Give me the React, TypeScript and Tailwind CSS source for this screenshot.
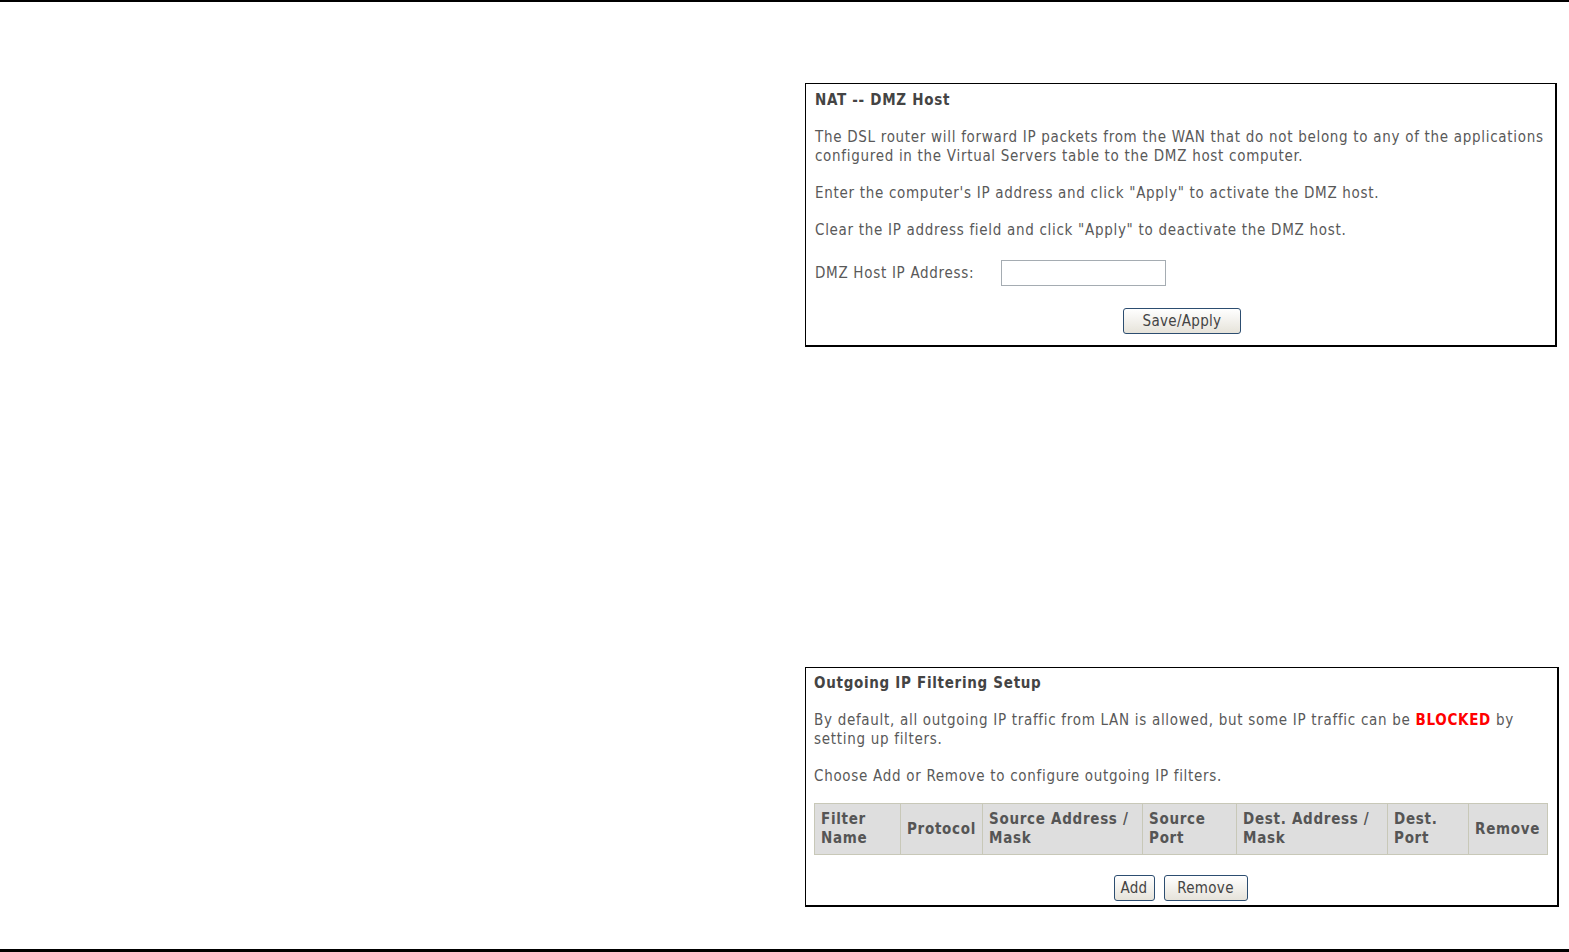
const font = "font-['DejaVu_Sans_Condensed','DejaVu_Sans',sans-serif] [font-stretch:condensed] tracking-[0.7px]";

const columns = [
  { label: ['Filter', 'Name'], w: 'w-[86px]' },
  { label: ['Protocol'], w: 'w-[82px]' },
  { label: ['Source Address /', 'Mask'], w: 'w-[160px]' },
  { label: ['Source', 'Port'], w: 'w-[94px]' },
  { label: ['Dest. Address /', 'Mask'], w: 'w-[151px]' },
  { label: ['Dest.', 'Port'], w: 'w-[81px]' },
  { label: ['Remove'], w: 'w-[79px]' },
];

function XpButton({ children, className = '' }: { children: React.ReactNode; className?: string }) {
  return (
    <button
      className={`h-[26px] rounded-[3px] border border-[#2c4d70] bg-gradient-to-b from-white to-[#e6e3da] text-[15px] leading-none tracking-[0.3px] text-[#444] ${className}`}>
      {children}
    </button>
  );
}

export default function App() {
  return (
    <div className={`relative h-[952px] w-full bg-white text-[15px] text-[#595959] ${font}`}>
      <div className="h-[2px] w-full bg-black" />
      <div className="pl-[805px] pt-[81px]">
        {/* DMZ host panel */}
        <section className="h-[264px] w-[752px] border border-r-2 border-b-2 border-black px-[9px] pt-[6px]">
          <h2 className="font-bold text-[#444] leading-[20px]">NAT -- DMZ Host</h2>
          <p className="mt-[18px] leading-[19px]">
            The DSL router will forward IP packets from the WAN that do not belong to any of the applications
            <br />
            configured in the Virtual Servers table to the DMZ host computer.
          </p>
          <p className="mt-[18px] leading-[19px]">
            Enter the computer's IP address and click "Apply" to activate the DMZ host.
          </p>
          <p className="mt-[18px] leading-[19px]">
            Clear the IP address field and click "Apply" to deactivate the DMZ host.
          </p>
          <div className="mt-[20px] flex items-center">
            <span className="w-[186px]">DMZ Host IP Address:</span>
            <input className="h-[26px] w-[165px] border border-[#a5acb2] bg-white outline-none" />
          </div>
          <div className="mt-[22px] flex justify-center pl-[3px]">
            <XpButton className="w-[118px]">Save/Apply</XpButton>
          </div>
        </section>

        {/* outgoing IP filtering panel */}
        <section className="mt-[320px] h-[240px] w-[754px] border border-r-2 border-b-2 border-black px-[8px] pt-[5px]">
          <h2 className="font-bold text-[#444] leading-[20px]">Outgoing IP Filtering Setup</h2>
          <p className="mt-[18px] leading-[19px]">
            By default, all outgoing IP traffic from LAN is allowed, but some IP traffic can be{' '}
            <span className="font-bold text-[#ff0000]">BLOCKED</span> by
            <br />
            setting up filters.
          </p>
          <p className="mt-[18px] leading-[19px]">Choose Add or Remove to configure outgoing IP filters.</p>
          <table className="mt-[17px] border-collapse border border-[#c8c8b8]">
            <thead>
              <tr className="h-[51px] bg-[#dedede]">
                {columns.map((c) => (
                  <th
                    key={c.label.join(' ')}
                    className={`${c.w} border border-[#c8c8b8] px-[6px] text-left align-middle font-bold leading-[19px] text-[#555]`}>
                    {c.label.map((l, i) => (
                      <div key={i}>{l}</div>
                    ))}
                  </th>
                ))}
              </tr>
            </thead>
          </table>
          <div className="mt-[20px] flex justify-center gap-[9px] pr-[2px]">
            <XpButton className="w-[41px]">Add</XpButton>
            <XpButton className="w-[84px]">Remove</XpButton>
          </div>
        </section>
      </div>
      <div className="absolute bottom-0 left-0 h-[3px] w-full bg-black" />
    </div>
  );
}
